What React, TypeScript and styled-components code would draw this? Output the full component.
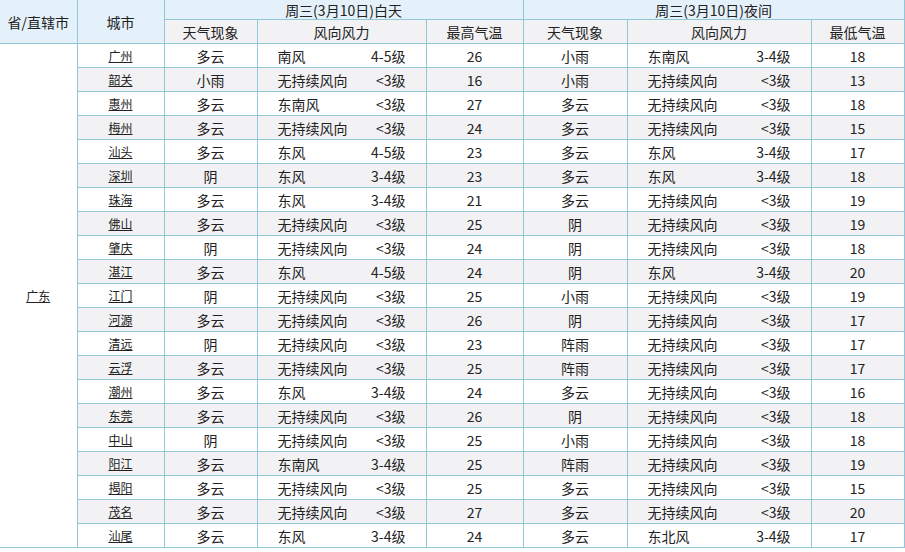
import React from "react";
import styled, { createGlobalStyle } from "styled-components";

const Global = createGlobalStyle`
  html, body { margin: 0; padding: 0; background: #ffffff; }
  body { font-family: "Noto Sans CJK SC", "Noto Sans", sans-serif; color: #222; }
`;

const BORDER = "#92c6d9";

const Table = styled.table`
  border-collapse: collapse;
  table-layout: fixed;
  width: 904px;
  font-size: 14px;
  color: #222;
  border-right: 1px solid ${BORDER};
  border-bottom: 1px solid ${BORDER};
`;

const Th = styled.th<{ $tone: "blue" | "gray"; $h: number }>`
  font-weight: normal;
  height: ${(p) => p.$h}px;
  padding: 0;
  line-height: 16px;
  text-align: center;
  background: ${(p) => (p.$tone === "blue" ? "#e5f1fa" : "#f2f2f4")};
  border: 1px solid ${BORDER};
  &:first-child { border-left: none; }
`;

const HeadRow = styled.tr`
  &:first-child > th { border-top: none; }
`;

const BodyRow = styled.tr<{ $alt: boolean }>`
  background: ${(p) => (p.$alt ? "#f2f2f4" : "#ffffff")};
`;

const Td = styled.td<{ $align?: "left" | "center" }>`
  height: 23px;
  padding: 0;
  line-height: 16px;
  text-align: ${(p) => p.$align || "center"};
  border: 1px solid ${BORDER};
  white-space: nowrap;
`;

const ProvCell = styled.td`
  background: #ffffff;
  border: 1px solid ${BORDER};
  border-left: none;
  text-align: center;
  padding: 0;
  font-size: 12px;
`;

const CityLink = styled.a`
  font-size: 12px;
  color: #222;
  text-decoration: underline;
`;

const Wind = styled.div`
  display: flex;
  justify-content: space-between;
  padding: 0 20px 0 20px;
`;

type Row = [string, string, string, string, string, string, string, string, string];

const rows: Row[] = [
  ["广州", "多云", "南风", "4-5级", "26", "小雨", "东南风", "3-4级", "18"],
  ["韶关", "小雨", "无持续风向", "<3级", "16", "小雨", "无持续风向", "<3级", "13"],
  ["惠州", "多云", "东南风", "<3级", "27", "多云", "无持续风向", "<3级", "18"],
  ["梅州", "多云", "无持续风向", "<3级", "24", "多云", "无持续风向", "<3级", "15"],
  ["汕头", "多云", "东风", "4-5级", "23", "多云", "东风", "3-4级", "17"],
  ["深圳", "阴", "东风", "3-4级", "23", "多云", "东风", "3-4级", "18"],
  ["珠海", "多云", "东风", "3-4级", "21", "多云", "无持续风向", "<3级", "19"],
  ["佛山", "多云", "无持续风向", "<3级", "25", "阴", "无持续风向", "<3级", "19"],
  ["肇庆", "阴", "无持续风向", "<3级", "24", "阴", "无持续风向", "<3级", "18"],
  ["湛江", "多云", "东风", "4-5级", "24", "阴", "东风", "3-4级", "20"],
  ["江门", "阴", "无持续风向", "<3级", "25", "小雨", "无持续风向", "<3级", "19"],
  ["河源", "多云", "无持续风向", "<3级", "26", "阴", "无持续风向", "<3级", "17"],
  ["清远", "阴", "无持续风向", "<3级", "23", "阵雨", "无持续风向", "<3级", "17"],
  ["云浮", "多云", "无持续风向", "<3级", "25", "阵雨", "无持续风向", "<3级", "17"],
  ["潮州", "多云", "东风", "3-4级", "24", "多云", "无持续风向", "<3级", "16"],
  ["东莞", "多云", "无持续风向", "<3级", "26", "阴", "无持续风向", "<3级", "18"],
  ["中山", "阴", "无持续风向", "<3级", "25", "小雨", "无持续风向", "<3级", "18"],
  ["阳江", "多云", "东南风", "3-4级", "25", "阵雨", "无持续风向", "<3级", "19"],
  ["揭阳", "多云", "无持续风向", "<3级", "25", "多云", "无持续风向", "<3级", "15"],
  ["茂名", "多云", "无持续风向", "<3级", "27", "多云", "无持续风向", "<3级", "20"],
  ["汕尾", "多云", "东风", "3-4级", "24", "多云", "东北风", "3-4级", "17"],
];

const widths = [77, 87, 93, 169, 97, 104, 184, 93];

export default function App() {
  return (
    <>
      <Global />
      <Table>
        <colgroup>
          {widths.map((w, i) => (
            <col key={i} style={{ width: w }} />
          ))}
        </colgroup>
        <thead>
          <HeadRow>
            <Th $tone="blue" $h={43} rowSpan={2}>省/直辖市</Th>
            <Th $tone="blue" $h={43} rowSpan={2}>城市</Th>
            <Th $tone="blue" $h={19} colSpan={3}>周三(3月10日)白天</Th>
            <Th $tone="blue" $h={19} colSpan={3}>周三(3月10日)夜间</Th>
          </HeadRow>
          <HeadRow>
            <Th $tone="gray" $h={23}>天气现象</Th>
            <Th $tone="gray" $h={23}>风向风力</Th>
            <Th $tone="gray" $h={23}>最高气温</Th>
            <Th $tone="gray" $h={23}>天气现象</Th>
            <Th $tone="gray" $h={23}>风向风力</Th>
            <Th $tone="gray" $h={23}>最低气温</Th>
          </HeadRow>
        </thead>
        <tbody>
          {rows.map((r, i) => (
            <BodyRow key={r[0]} $alt={i % 2 === 1}>
              {i === 0 && (
                <ProvCell rowSpan={rows.length}>
                  <CityLink href="#">广东</CityLink>
                </ProvCell>
              )}
              <Td>
                <CityLink href="#">{r[0]}</CityLink>
              </Td>
              <Td>{r[1]}</Td>
              <Td $align="left">
                <Wind>
                  <span>{r[2]}</span>
                  <span>{r[3]}</span>
                </Wind>
              </Td>
              <Td>{r[4]}</Td>
              <Td>{r[5]}</Td>
              <Td $align="left">
                <Wind>
                  <span>{r[6]}</span>
                  <span>{r[7]}</span>
                </Wind>
              </Td>
              <Td>{r[8]}</Td>
            </BodyRow>
          ))}
        </tbody>
      </Table>
    </>
  );
}
